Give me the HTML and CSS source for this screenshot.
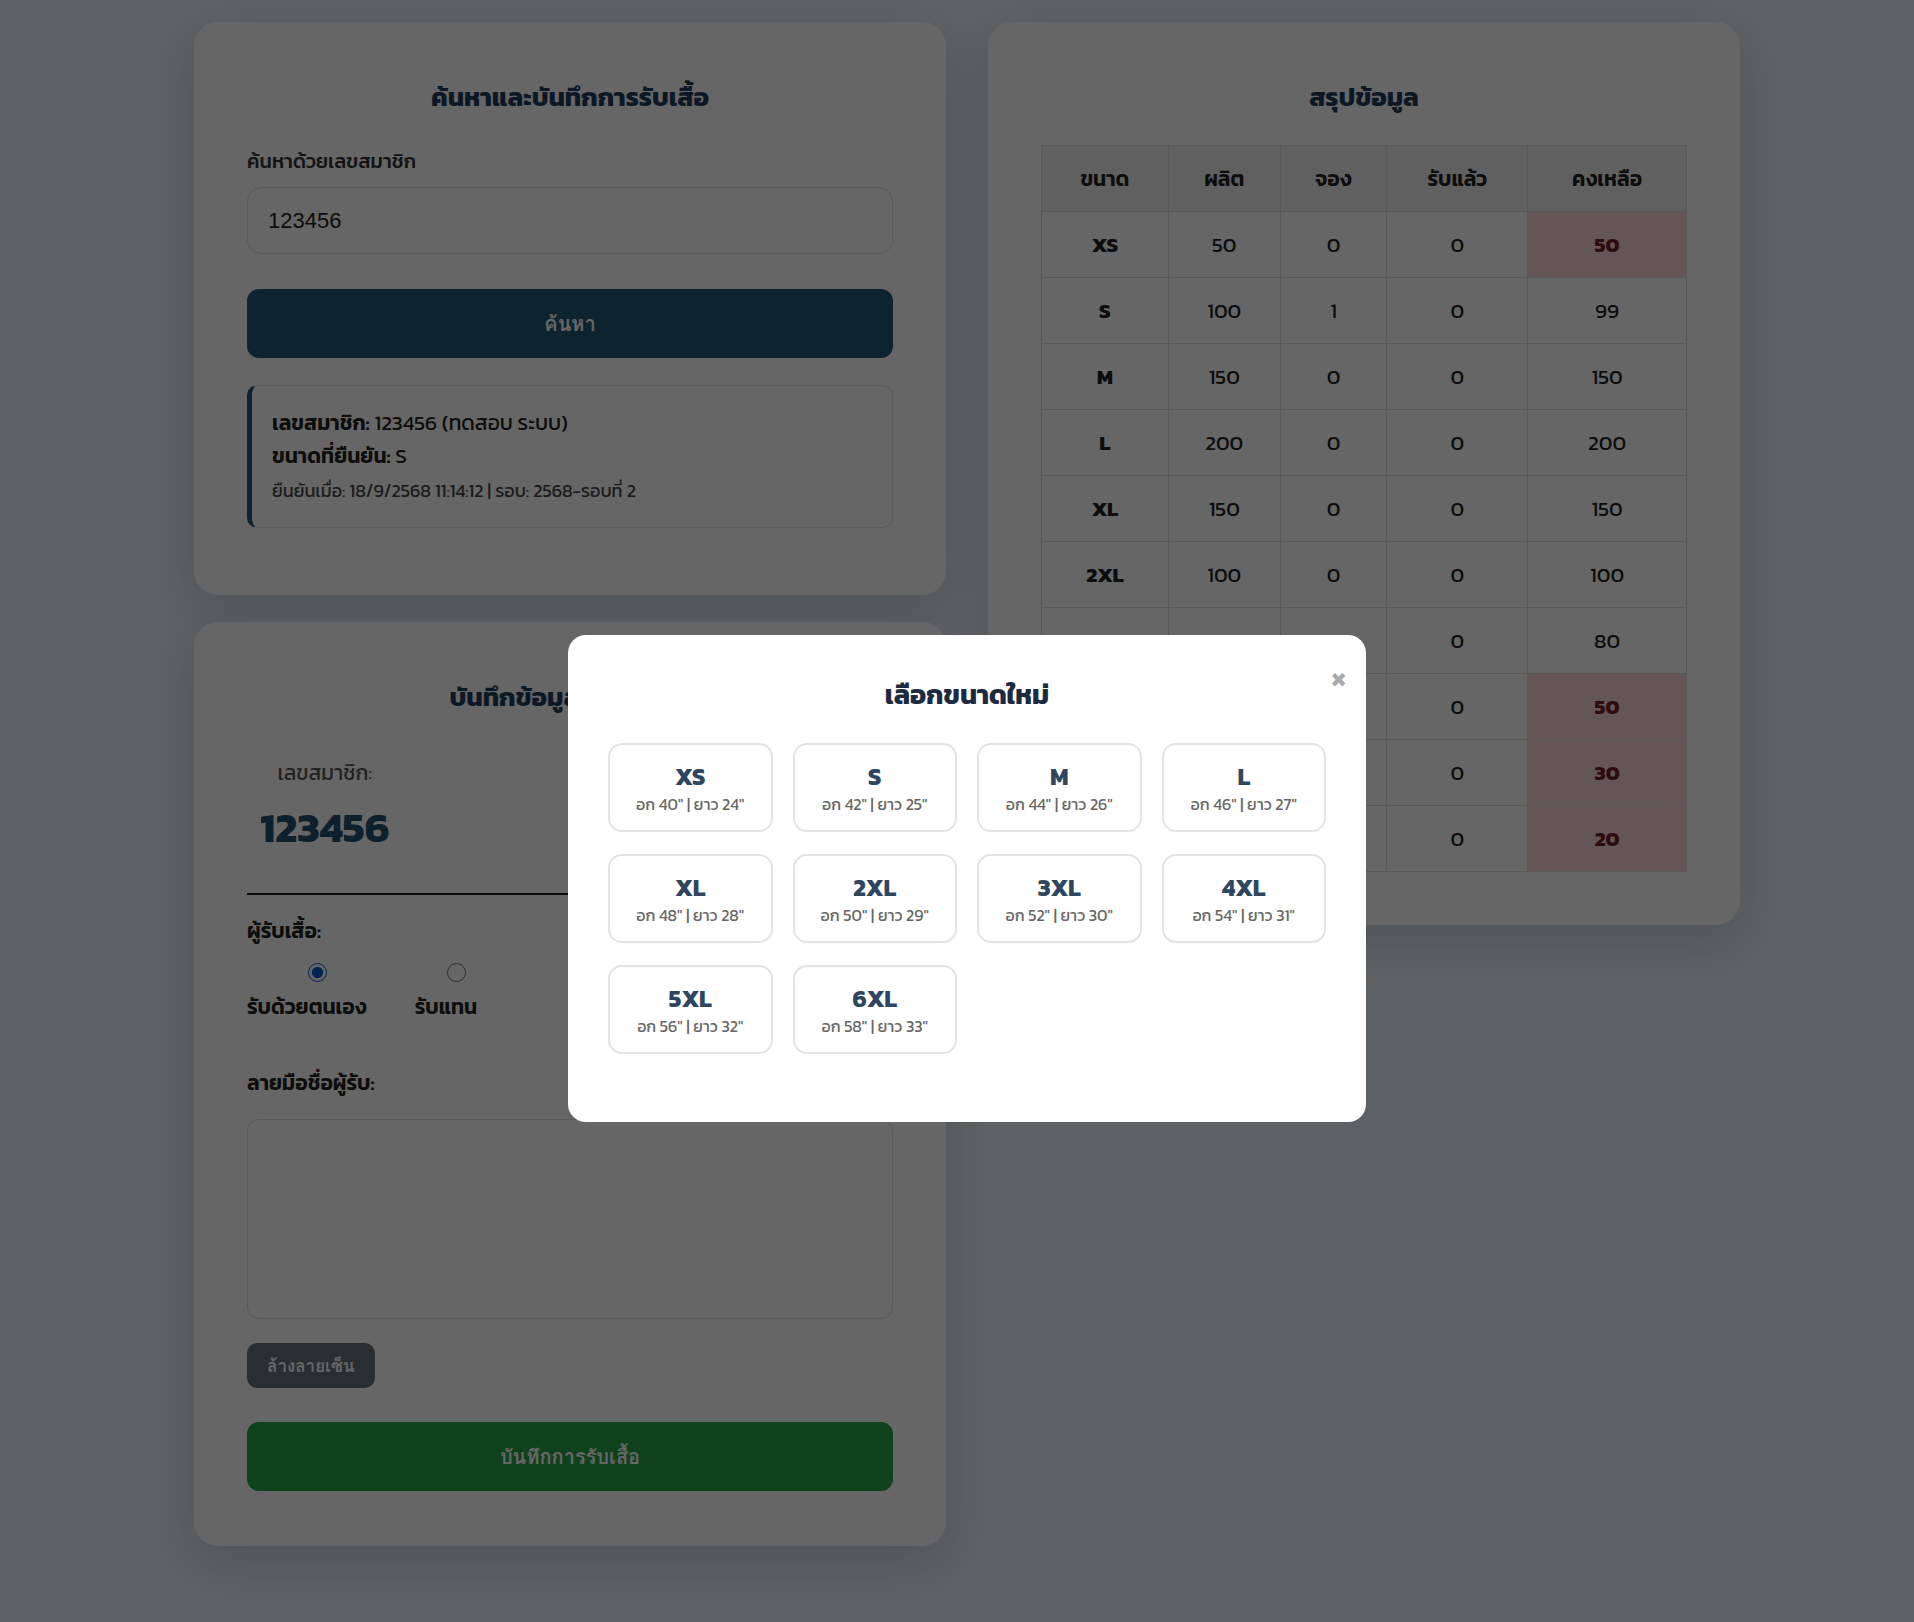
FILE: index.html
```html
<!DOCTYPE html>
<html lang="th">
<head>
<meta charset="utf-8">
<title>ระบบรับเสื้อ</title>
<link rel="stylesheet" href="styles.css">
</head>
<body>
<div class="layout">
  <div class="col">
    <section class="card card-search">
      <h2 class="card-title">ค้นหาและบันทึกการรับเสื้อ</h2>
      <label class="field-label">ค้นหาด้วยเลขสมาชิก</label>
      <input class="text-input" type="text" value="123456">
      <button class="btn btn-primary">ค้นหา</button>
      <div class="info-box">
        <div class="info-line"><b>เลขสมาชิก:</b> 123456 (ทดสอบ ระบบ)</div>
        <div class="info-line"><b>ขนาดที่ยืนยัน:</b> S</div>
        <div class="info-small">ยืนยันเมื่อ: 18/9/2568 11:14:12 | รอบ: 2568-รอบที่ 2</div>
      </div>
    </section>

    <section class="card card-record">
      <h2 class="card-title">บันทึกข้อมูลการรับเสื้อ</h2>
      <div class="member-row">
        <div class="member-id">
          <span class="member-label">เลขสมาชิก:</span>
          <span class="member-number">123456</span>
        </div>
        <div class="member-size">
          <span class="member-label">ขนาด:</span>
          <span class="member-number">S</span>
        </div>
      </div>
      <div class="field-title">ผู้รับเสื้อ:</div>
      <div class="radio-group">
        <label class="radio-item"><input type="radio" name="who" checked><span>รับด้วยตนเอง</span></label>
        <label class="radio-item"><input type="radio" name="who"><span>รับแทน</span></label>
      </div>
      <div class="field-title sig-title">ลายมือชื่อผู้รับ:</div>
      <div class="sig-pad"></div>
      <button class="btn btn-clear">ล้างลายเซ็น</button>
      <button class="btn btn-save">บันทึกการรับเสื้อ</button>
    </section>
  </div>

  <div class="col">
    <section class="card card-summary">
      <h2 class="card-title">สรุปข้อมูล</h2>
      <table class="summary">
        <thead>
          <tr><th class="c1">ขนาด</th><th class="c2">ผลิต</th><th class="c3">จอง</th><th class="c4">รับแล้ว</th><th class="c5">คงเหลือ</th></tr>
        </thead>
        <tbody>
          <tr><td class="size">XS</td><td>50</td><td>0</td><td>0</td><td class="low">50</td></tr>
          <tr><td class="size">S</td><td>100</td><td>1</td><td>0</td><td>99</td></tr>
          <tr><td class="size">M</td><td>150</td><td>0</td><td>0</td><td>150</td></tr>
          <tr><td class="size">L</td><td>200</td><td>0</td><td>0</td><td>200</td></tr>
          <tr><td class="size">XL</td><td>150</td><td>0</td><td>0</td><td>150</td></tr>
          <tr><td class="size">2XL</td><td>100</td><td>0</td><td>0</td><td>100</td></tr>
          <tr><td class="size">3XL</td><td>80</td><td>0</td><td>0</td><td>80</td></tr>
          <tr><td class="size">4XL</td><td>50</td><td>0</td><td>0</td><td class="low">50</td></tr>
          <tr><td class="size">5XL</td><td>30</td><td>0</td><td>0</td><td class="low">30</td></tr>
          <tr><td class="size">6XL</td><td>20</td><td>0</td><td>0</td><td class="low">20</td></tr>
        </tbody>
      </table>
    </section>
  </div>
</div>

<div class="overlay">
  <div class="modal">
    <span class="modal-close">✖</span>
    <h3 class="modal-title">เลือกขนาดใหม่</h3>
    <div class="size-grid">
      <button class="size-opt"><span class="size-name">XS</span><span class="size-dim">อก 40" | ยาว 24"</span></button>
      <button class="size-opt"><span class="size-name">S</span><span class="size-dim">อก 42" | ยาว 25"</span></button>
      <button class="size-opt"><span class="size-name">M</span><span class="size-dim">อก 44" | ยาว 26"</span></button>
      <button class="size-opt"><span class="size-name">L</span><span class="size-dim">อก 46" | ยาว 27"</span></button>
      <button class="size-opt"><span class="size-name">XL</span><span class="size-dim">อก 48" | ยาว 28"</span></button>
      <button class="size-opt"><span class="size-name">2XL</span><span class="size-dim">อก 50" | ยาว 29"</span></button>
      <button class="size-opt"><span class="size-name">3XL</span><span class="size-dim">อก 52" | ยาว 30"</span></button>
      <button class="size-opt"><span class="size-name">4XL</span><span class="size-dim">อก 54" | ยาว 31"</span></button>
      <button class="size-opt"><span class="size-name">5XL</span><span class="size-dim">อก 56" | ยาว 32"</span></button>
      <button class="size-opt"><span class="size-name">6XL</span><span class="size-dim">อก 58" | ยาว 33"</span></button>
    </div>
  </div>
</div>
</body>
</html>
```

FILE: styles.css
```css
* { box-sizing: border-box; }

html, body {
  margin: 0;
  padding: 0;
}

body {
  background: #ecf2f7;
  font-family: "Kanit", "Prompt", "Noto Sans Thai", "Noto Sans", sans-serif;
  color: #333;
  min-height: 1622px;
}

.layout {
  display: grid;
  grid-template-columns: 752px 752px;
  column-gap: 42px;
  padding: 22px 0 0 194px;
  align-items: start;
}

.col {
  display: flex;
  flex-direction: column;
  gap: 27px;
}

.card {
  background: #fff;
  border-radius: 24px;
  padding: 53px 53px 53px;
  box-shadow: 0 16px 50px rgba(30, 50, 80, 0.16);
}

.card-title {
  margin: 0 0 26px;
  height: 44px;
  line-height: 44px;
  font-size: 26px;
  font-weight: 700;
  text-align: center;
  color: #1f3d5b;
}

.field-label {
  display: block;
  font-size: 20px;
  font-weight: 500;
  line-height: 32px;
  color: #333;
  margin-bottom: 10px;
}

.text-input {
  display: block;
  width: 100%;
  height: 67px;
  border: 1px solid #dcdfe3;
  border-radius: 14px;
  padding: 0 20px;
  font-family: "Liberation Sans", Arial, sans-serif;
  font-size: 22px;
  color: #222;
  background: #fff;
}

.btn {
  display: block;
  border: none;
  color: #fff;
  font-family: "Garuda", "Loma", "Noto Sans Thai Looped", "Liberation Sans", Arial, sans-serif;
  font-weight: 700;
  cursor: pointer;
}

.btn-primary {
  width: 100%;
  height: 69px;
  margin-top: 35px;
  border-radius: 12px;
  background: #245878;
  font-size: 20px;
}

.info-box {
  margin-top: 27px;
  margin-bottom: 14px;
  border: 1px solid #e3e6e9;
  border-left: 5px solid #245878;
  border-radius: 10px;
  padding: 20px 20px 21px 20px;
  background: #fff;
}

.info-line {
  font-size: 21px;
  line-height: 33px;
  color: #222;
}

.info-line b { font-weight: 600; }

.info-small {
  margin-top: 4px;
  font-size: 18px;
  line-height: 30px;
  color: #444;
}

/* record card */
.member-row {
  display: flex;
  justify-content: space-between;
  align-items: flex-start;
  border-bottom: 2px solid #222;
  padding: 14px 80px 40px 13px;
}

.member-id, .member-size {
  display: flex;
  flex-direction: column;
  align-items: center;
}

.member-label {
  font-size: 21px;
  line-height: 28px;
  color: #555;
}

.member-number {
  margin-top: 16px;
  font-size: 42px;
  line-height: 50px;
  font-weight: 700;
  color: #23506f;
}

.field-title {
  margin-top: 21px;
  font-size: 21px;
  line-height: 30px;
  font-weight: 600;
  color: #222;
}

.radio-group {
  display: flex;
  gap: 48px;
  margin-top: 17px;
}

.radio-item {
  display: flex;
  flex-direction: column;
  align-items: center;
  font-size: 21px;
  font-weight: 600;
  color: #222;
}

.radio-item input {
  width: 19px;
  height: 19px;
  margin: 0 0 10px 22px;
  accent-color: #0a58ca;
}

.radio-item span { line-height: 30px; }

.sig-title { margin-top: 46px; }

.sig-pad {
  margin-top: 21px;
  height: 200px;
  border: 1px solid #dcdfe3;
  border-radius: 12px;
  background: #fff;
}

.btn-clear {
  margin-top: 24px;
  height: 45px;
  padding: 0 20px;
  border-radius: 10px;
  background: #6a737c;
  font-size: 17px;
}

.btn-save {
  width: 100%;
  height: 69px;
  margin-top: 34px;
  border-radius: 12px;
  background: #25a348;
  font-size: 20px;
}

.card-record { padding-bottom: 55px; }

/* summary */
.summary {
  width: 646px;
  margin-top: 21px;
  border-collapse: collapse;
  font-size: 21px;
  color: #222;
}

.summary th, .summary td {
  border: 1px solid #dcdcdc;
  height: 66px;
  text-align: center;
  padding: 0;
}

.summary th {
  background: #f1f1f1;
  font-weight: 600;
}

.summary .c1 { width: 127px; }
.summary .c2 { width: 112px; }
.summary .c3 { width: 107px; }
.summary .c4 { width: 141px; }
.summary .c5 { width: 159px; }

.summary td.size { font-weight: 700; }

.summary td.low {
  background: #f9d8da;
  color: #741c24;
  font-weight: 700;
}

/* modal */
.overlay {
  position: fixed;
  inset: 0;
  background: rgba(0, 0, 0, 0.6);
}

.modal {
  position: absolute;
  top: 635px;
  left: 568px;
  width: 798px;
  height: 487px;
  background: #fff;
  border-radius: 18px;
  padding: 40px;
}

.modal-close {
  position: absolute;
  top: 33px;
  right: 19px;
  font-family: "DejaVu Sans", sans-serif;
  font-size: 20px;
  color: #aaa;
}

.modal-title {
  margin: 0;
  height: 40px;
  line-height: 40px;
  font-size: 27px;
  font-weight: 700;
  text-align: center;
  color: #1c2b42;
}

.size-grid {
  margin-top: 28px;
  display: grid;
  grid-template-columns: repeat(4, 1fr);
  column-gap: 20px;
  row-gap: 22px;
}

.size-opt {
  height: 89px;
  border: 2px solid #e2e4e6;
  border-radius: 14px;
  background: #fff;
  display: flex;
  flex-direction: column;
  align-items: center;
  justify-content: center;
  font-family: inherit;
  padding: 2px 0 0;
}

.size-name {
  font-size: 24px;
  line-height: 30px;
  font-weight: 700;
  color: #2e4660;
}

.size-dim {
  font-size: 16px;
  line-height: 24px;
  color: #666;
}
```
